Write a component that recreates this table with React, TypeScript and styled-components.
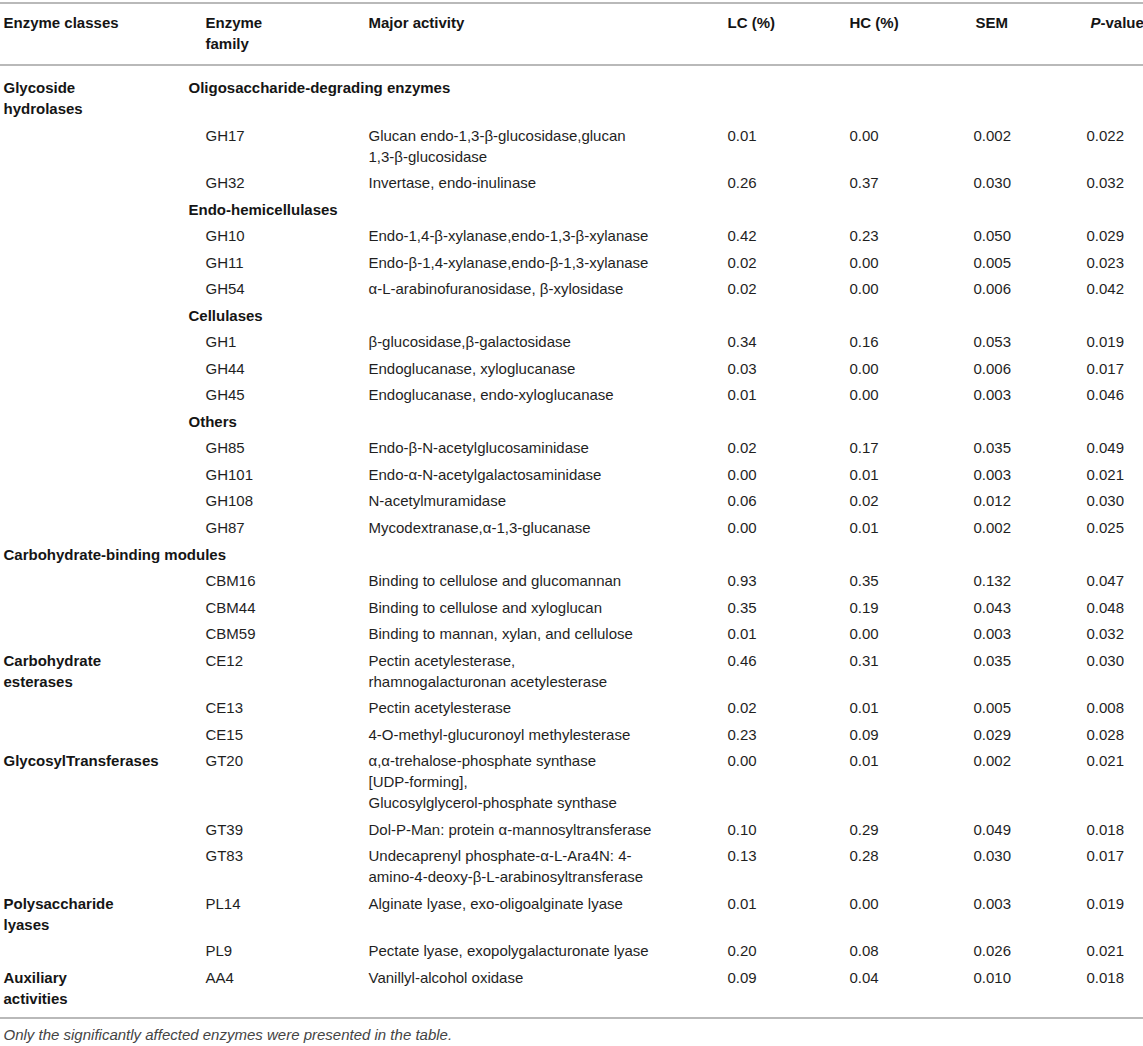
import React from 'react';
import styled, { createGlobalStyle } from 'styled-components';

const GlobalStyle = createGlobalStyle`
  html, body {
    margin: 0;
    padding: 0;
    background: #ffffff;
  }
  body {
    font-family: 'Liberation Sans', Arial, Helvetica, sans-serif;
    color: #1c1c1c;
  }
`;

type Entry = {
  kind: 'entry';
  cls?: string[];
  family: string;
  activity: string[];
  lc: string;
  hc: string;
  sem: string;
  p: string;
};
type Group = { kind: 'group'; cls?: string[]; title: string };
type Band = { kind: 'band'; title: string };
type Row = Entry | Group | Band;

const e = (
  family: string,
  activity: string[],
  lc: string,
  hc: string,
  sem: string,
  p: string,
  cls?: string[]
): Entry => ({ kind: 'entry', family, activity, lc, hc, sem, p, cls });

const rows: Row[] = [
  { kind: 'group', cls: ['Glycoside', 'hydrolases'], title: 'Oligosaccharide-degrading enzymes' },
  e('GH17', ['Glucan endo-1,3-β-glucosidase,glucan', '1,3-β-glucosidase'], '0.01', '0.00', '0.002', '0.022'),
  e('GH32', ['Invertase, endo-inulinase'], '0.26', '0.37', '0.030', '0.032'),
  { kind: 'group', title: 'Endo-hemicellulases' },
  e('GH10', ['Endo-1,4-β-xylanase,endo-1,3-β-xylanase'], '0.42', '0.23', '0.050', '0.029'),
  e('GH11', ['Endo-β-1,4-xylanase,endo-β-1,3-xylanase'], '0.02', '0.00', '0.005', '0.023'),
  e('GH54', ['α-L-arabinofuranosidase, β-xylosidase'], '0.02', '0.00', '0.006', '0.042'),
  { kind: 'group', title: 'Cellulases' },
  e('GH1', ['β-glucosidase,β-galactosidase'], '0.34', '0.16', '0.053', '0.019'),
  e('GH44', ['Endoglucanase, xyloglucanase'], '0.03', '0.00', '0.006', '0.017'),
  e('GH45', ['Endoglucanase, endo-xyloglucanase'], '0.01', '0.00', '0.003', '0.046'),
  { kind: 'group', title: 'Others' },
  e('GH85', ['Endo-β-N-acetylglucosaminidase'], '0.02', '0.17', '0.035', '0.049'),
  e('GH101', ['Endo-α-N-acetylgalactosaminidase'], '0.00', '0.01', '0.003', '0.021'),
  e('GH108', ['N-acetylmuramidase'], '0.06', '0.02', '0.012', '0.030'),
  e('GH87', ['Mycodextranase,α-1,3-glucanase'], '0.00', '0.01', '0.002', '0.025'),
  { kind: 'band', title: 'Carbohydrate-binding modules' },
  e('CBM16', ['Binding to cellulose and glucomannan'], '0.93', '0.35', '0.132', '0.047'),
  e('CBM44', ['Binding to cellulose and xyloglucan'], '0.35', '0.19', '0.043', '0.048'),
  e('CBM59', ['Binding to mannan, xylan, and cellulose'], '0.01', '0.00', '0.003', '0.032'),
  e('CE12', ['Pectin acetylesterase,', 'rhamnogalacturonan acetylesterase'], '0.46', '0.31', '0.035', '0.030', ['Carbohydrate', 'esterases']),
  e('CE13', ['Pectin acetylesterase'], '0.02', '0.01', '0.005', '0.008'),
  e('CE15', ['4-O-methyl-glucuronoyl methylesterase'], '0.23', '0.09', '0.029', '0.028'),
  e('GT20', ['α,α-trehalose-phosphate synthase', '[UDP-forming],', 'Glucosylglycerol-phosphate synthase'], '0.00', '0.01', '0.002', '0.021', ['GlycosylTransferases']),
  e('GT39', ['Dol-P-Man: protein α-mannosyltransferase'], '0.10', '0.29', '0.049', '0.018'),
  e('GT83', ['Undecaprenyl phosphate-α-L-Ara4N: 4-', 'amino-4-deoxy-β-L-arabinosyltransferase'], '0.13', '0.28', '0.030', '0.017'),
  e('PL14', ['Alginate lyase, exo-oligoalginate lyase'], '0.01', '0.00', '0.003', '0.019', ['Polysaccharide', 'lyases']),
  e('PL9', ['Pectate lyase, exopolygalacturonate lyase'], '0.20', '0.08', '0.026', '0.021'),
  e('AA4', ['Vanillyl-alcohol oxidase'], '0.09', '0.04', '0.010', '0.018', ['Auxiliary', 'activities']),
];

// column widths, in px
const widths = [185, 180, 359, 122, 124, 113, 60];

const Lines = ({ lines }: { lines: string[] }) => (
  <>
    {lines.map((l, i) => (
      <React.Fragment key={i}>
        {i > 0 && <br />}
        {l}
      </React.Fragment>
    ))}
  </>
);

export default function App() {
  return (
    <Page>
      <GlobalStyle />
      <Table>
        <colgroup>
          {widths.map((w, i) => (
            <col key={i} style={{ width: w }} />
          ))}
        </colgroup>
        <thead>
          <HeadRow>
            <HeadCell>Enzyme classes</HeadCell>
            <HeadCell $indent={17}>
              Enzyme
              <br />
              family
            </HeadCell>
            <HeadCell>Major activity</HeadCell>
            <HeadCell>LC (%)</HeadCell>
            <HeadCell>HC (%)</HeadCell>
            <HeadCell $indent={2}>SEM</HeadCell>
            <HeadCell $indent={4}>
              <i>P</i>-value
            </HeadCell>
          </HeadRow>
        </thead>
        <tbody>
          {rows.map((row, i) => {
            const first = i === 0;
            const last = i === rows.length - 1;
            if (row.kind === 'band') {
              return (
                <BodyRow key={i} $first={first} $last={last}>
                  <Cell colSpan={7} $bold>
                    {row.title}
                  </Cell>
                </BodyRow>
              );
            }
            if (row.kind === 'group') {
              return (
                <BodyRow key={i} $first={first} $last={last}>
                  <Cell $bold>{row.cls && <Lines lines={row.cls} />}</Cell>
                  <Cell colSpan={6} $bold>
                    {row.title}
                  </Cell>
                </BodyRow>
              );
            }
            return (
              <BodyRow key={i} $first={first} $last={last}>
                <Cell $bold>{row.cls && <Lines lines={row.cls} />}</Cell>
                <Cell $indent={17}>{row.family}</Cell>
                <Cell>
                  <Lines lines={row.activity} />
                </Cell>
                <Cell>{row.lc}</Cell>
                <Cell>{row.hc}</Cell>
                <Cell>{row.sem}</Cell>
                <Cell>{row.p}</Cell>
              </BodyRow>
            );
          })}
        </tbody>
      </Table>
      <Note>Only the significantly affected enzymes were presented in the table.</Note>
    </Page>
  );
}

const Page = styled.div`
  width: 1143px;
  padding-top: 2px;
`;

const Table = styled.table`
  width: 1143px;
  table-layout: fixed;
  border-collapse: collapse;
  font-size: 15px;
  line-height: 21px;
`;

const HeadRow = styled.tr`
  border-top: 2px solid #b9b9b9;
  border-bottom: 2px solid #b9b9b9;
`;

const HeadCell = styled.th<{ $indent?: number }>`
  text-align: left;
  vertical-align: top;
  font-weight: bold;
  color: #151515;
  white-space: nowrap;
  padding: 8px 0 10px ${(p) => 3.5 + (p.$indent ?? 0)}px;
  overflow: visible;
`;

const BodyRow = styled.tr<{ $first?: boolean; $last?: boolean }>`
  border-bottom: ${(p) => (p.$last ? '2px solid #b9b9b9' : 'none')};

  & > td {
    padding-top: ${(p) => (p.$first ? 11 : 2.78)}px;
    padding-bottom: ${(p) => (p.$last ? 8.5 : 2.78)}px;
  }
`;

const Cell = styled.td<{ $bold?: boolean; $indent?: number }>`
  vertical-align: top;
  white-space: nowrap;
  padding-left: ${(p) => 3.5 + (p.$indent ?? 0)}px;
  padding-right: 0;
  font-weight: ${(p) => (p.$bold ? 'bold' : 'normal')};
  color: ${(p) => (p.$bold ? '#151515' : '#1f1f1f')};
`;

const Note = styled.div`
  margin-top: 5px;
  padding-left: 3.5px;
  font-size: 15px;
  line-height: 21px;
  font-style: italic;
  color: #444444;
`;
